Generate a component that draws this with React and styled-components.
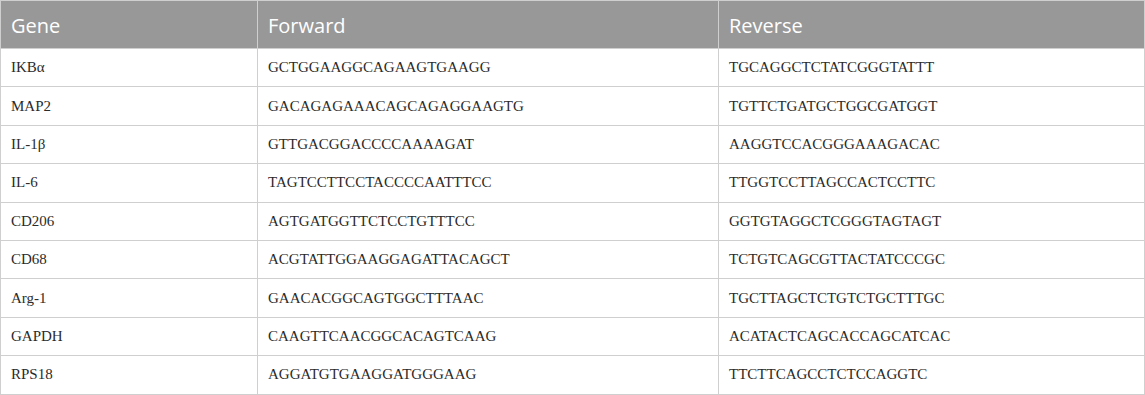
import React from "react";
import styled, { createGlobalStyle } from "styled-components";

const Global = createGlobalStyle`
  html, body { margin: 0; padding: 0; background: #ffffff; }
  * { box-sizing: border-box; }
`;

const Grid = styled.div`
  display: grid;
  width: 1145px;
  grid-template-columns: 256px 460px 1fr;
  grid-template-rows: 47px repeat(9, 37.4px);
  gap: 1px;
  padding: 1px;
  background: #cfcfcf;
`;

const HeadCell = styled.div`
  background: #989898;
  color: #ffffff;
  font-family: "Open Sans", "Liberation Sans", sans-serif;
  font-size: 20px;
  font-weight: 400;
  display: flex;
  align-items: center;
  padding: 1px 10px 0;
`;

const Cell = styled.div`
  background: #ffffff;
  color: #2b2b2b;
  font-family: "Liberation Serif", "Times New Roman", serif;
  font-size: 15px;
  display: flex;
  align-items: center;
  padding: 0 10px;
  white-space: nowrap;
`;

const rows = [
  ["IKBα", "GCTGGAAGGCAGAAGTGAAGG", "TGCAGGCTCTATCGGGTATTT"],
  ["MAP2", "GACAGAGAAACAGCAGAGGAAGTG", "TGTTCTGATGCTGGCGATGGT"],
  ["IL-1β", "GTTGACGGACCCCAAAAGAT", "AAGGTCCACGGGAAAGACAC"],
  ["IL-6", "TAGTCCTTCCTACCCCAATTTCC", "TTGGTCCTTAGCCACTCCTTC"],
  ["CD206", "AGTGATGGTTCTCCTGTTTCC", "GGTGTAGGCTCGGGTAGTAGT"],
  ["CD68", "ACGTATTGGAAGGAGATTACAGCT", "TCTGTCAGCGTTACTATCCCGC"],
  ["Arg-1", "GAACACGGCAGTGGCTTTAAC", "TGCTTAGCTCTGTCTGCTTTGC"],
  ["GAPDH", "CAAGTTCAACGGCACAGTCAAG", "ACATACTCAGCACCAGCATCAC"],
  ["RPS18", "AGGATGTGAAGGATGGGAAG", "TTCTTCAGCCTCTCCAGGTC"],
];

export default function App() {
  return (
    <>
      <Global />
      <Grid>
        <HeadCell>Gene</HeadCell>
        <HeadCell>Forward</HeadCell>
        <HeadCell>Reverse</HeadCell>
        {rows.map((r) =>
          r.map((c, i) => <Cell key={r[0] + i}>{c}</Cell>)
        )}
      </Grid>
    </>
  );
}
